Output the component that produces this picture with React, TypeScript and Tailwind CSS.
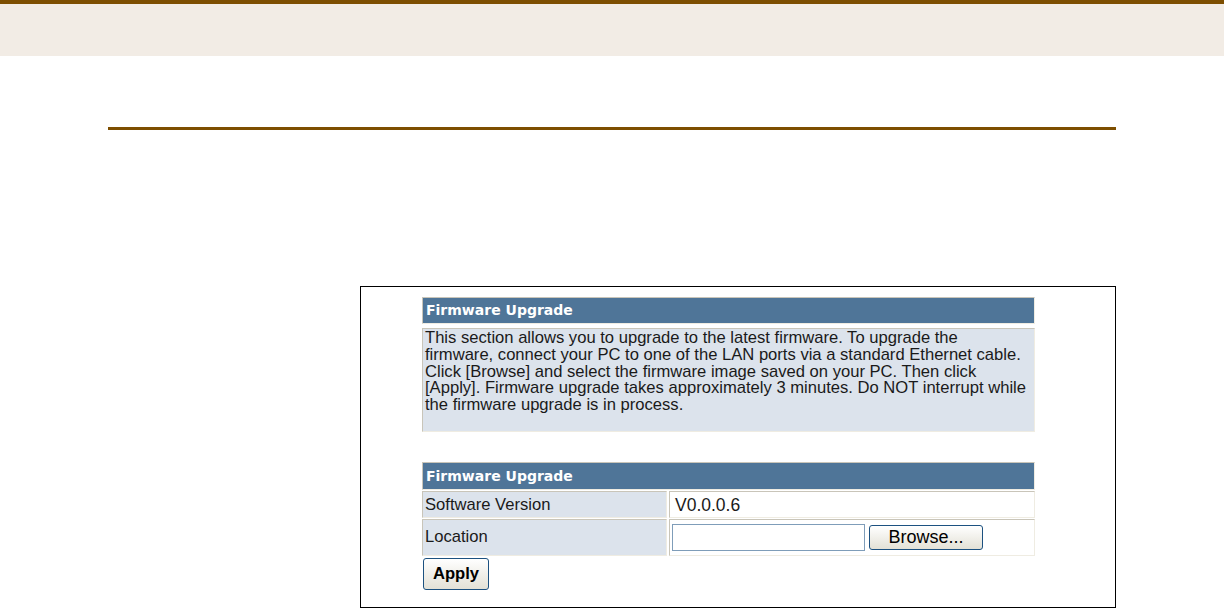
import React from "react";

const cellBorder = "border border-t-[#c9c5b9] border-l-[#c9c5b9] border-r-[#efece2] border-b-[#efece2]";

export default function App() {
  return (
    <div className="w-[1224px] h-[609px] bg-white overflow-hidden" style={{ fontFamily: '"Liberation Sans", Arial, sans-serif' }}>
      <div className="h-[4px] bg-[#7d4e00]" />
      <div className="h-[52px] bg-[#f2ece5]" />
      <div className="ml-[108px] mt-[71px] w-[1008px] h-[3px] bg-[#7d4e00]" />
      <div className="ml-[360px] mt-[156px] w-[756px] h-[322px] border border-black pt-[10px] pl-[61px]">
        <div className="w-[613px] flex flex-col">
          <div className={`${cellBorder} h-[27px] bg-[#4f7598] flex items-center pl-[3px]`}>
            <span className="text-white font-bold text-[14px]" style={{ fontFamily: '"DejaVu Sans", Verdana, sans-serif' }}>Firmware Upgrade</span>
          </div>
          <div className={`${cellBorder} mt-[4px] h-[104px] bg-[#dce3ec] px-[2px] pt-[1px] text-[16.6px] leading-[16.8px] text-[#1a1a1a]`}>
            This section allows you to upgrade to the latest firmware. To upgrade the<br />
            firmware, connect your PC to one of the LAN ports via a standard Ethernet cable.<br />
            Click [Browse] and select the firmware image saved on your PC. Then click<br />
            [Apply]. Firmware upgrade takes approximately 3 minutes. Do NOT interrupt while<br />
            the firmware upgrade is in process.
          </div>

          <div className={`${cellBorder} mt-[30px] h-[28px] bg-[#4f7598] flex items-center pl-[3px]`}>
            <span className="text-white font-bold text-[14px]" style={{ fontFamily: '"DejaVu Sans", Verdana, sans-serif' }}>Firmware Upgrade</span>
          </div>
          <div className="mt-[1px] flex gap-[2px] h-[27px]">
            <div className={`${cellBorder} w-[245px] bg-[#dce3ec] flex items-center pl-[2px] pt-[2px] text-[16.6px] text-[#1a1a1a]`}>Software Version</div>
            <div className={`${cellBorder} flex-1 bg-white flex items-center pl-[5px] pt-[2px] text-[17.5px] text-[#1a1a1a]`}>V0.0.0.6</div>
          </div>
          <div className="mt-[1px] flex gap-[2px] h-[37px]">
            <div className={`${cellBorder} w-[245px] bg-[#dce3ec] flex items-center pl-[2px] text-[16.6px] text-[#1a1a1a]`}>Location</div>
            <div className={`${cellBorder} flex-1 bg-white flex items-center pl-[2px] gap-[4px]`}>
              <div className="w-[193px] h-[27px] border border-[#7f9db9] bg-white" />
              <div className="w-[114px] h-[25px] rounded-[3px] border border-[#1c5180] bg-gradient-to-b from-white to-[#e3e1d6] flex items-center justify-center text-[18px] text-black">Browse...</div>
            </div>
          </div>
          <div className="mt-[2px] w-[66px] h-[32px] ml-[1px] rounded-[3px] border border-[#1c5180] bg-gradient-to-b from-white to-[#e3e1d6] flex items-center justify-center text-[16.6px] font-bold text-black">Apply</div>
        </div>
      </div>
    </div>
  );
}
